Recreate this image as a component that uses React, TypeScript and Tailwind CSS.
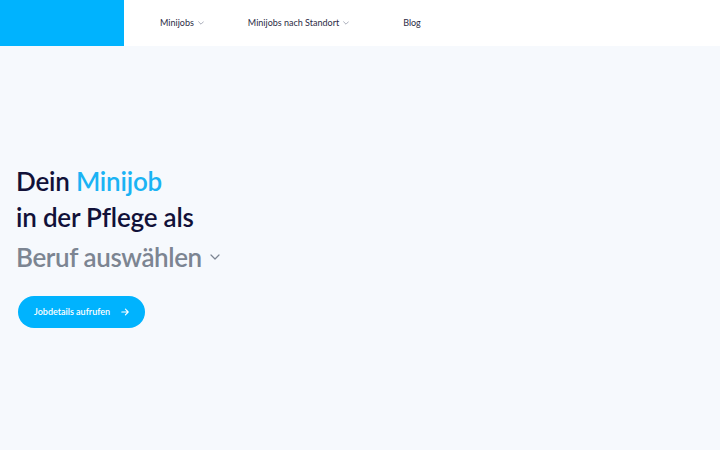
import React from "react";

function Chevron({ className = "" }: { className?: string }) {
  return (
    <svg viewBox="0 0 10 6" className={className} fill="none" stroke="currentColor" strokeWidth="1.2" strokeLinecap="round" strokeLinejoin="round">
      <path d="M1 1l4 4 4-4" />
    </svg>
  );
}

export default function App() {
  return (
    <div className="w-[720px] h-[450px] bg-[#f6f9fd] overflow-hidden" style={{ fontFamily: "Lato, 'Open Sans', sans-serif" }}>
      <header className="h-[46px] bg-white flex">
        <div className="w-[124px] h-full bg-[#00b3fe]" />
        <nav className="flex items-center text-[9px] text-[#2b2b45]">
          <div className="ml-[36px] flex items-center gap-[4px]">
            <span>Minijobs</span>
            <Chevron className="w-[6px] h-[4px] text-[#8a8fa0]" />
          </div>
          <div className="ml-[44px] flex items-center gap-[4px]">
            <span>Minijobs nach Standort</span>
            <Chevron className="w-[6px] h-[4px] text-[#8a8fa0]" />
          </div>
          <div className="ml-[54px]">
            <span>Blog</span>
          </div>
        </nav>
      </header>
      <main className="pl-[16px] pt-[117px]">
        <h1 className="text-[26px] leading-[36px] font-semibold text-[#111139] tracking-[-0.2px]">
          <div>
            Dein <span className="text-[#1ab3f4]">Minijob</span>
          </div>
          <div>in der Pflege als</div>
          <div className="flex items-center gap-[8px] text-[#7c8592] leading-[44px] tracking-[-0.4px]">
            <span>Beruf auswählen</span>
            <Chevron className="w-[10px] h-[6px] text-[#7c8592]" />
          </div>
        </h1>
        <button className="mt-[17px] ml-[2px] h-[32px] w-[127px] rounded-full bg-[#00b3fe] text-white text-[9px] font-semibold flex items-center pl-[16px] gap-[11px]">
          <span>Jobdetails aufrufen</span>
          <svg viewBox="0 0 10 10" className="w-[8px] h-[8px]" fill="none" stroke="currentColor" strokeWidth="1.4" strokeLinecap="round" strokeLinejoin="round">
            <path d="M1 5h8M5.5 1.5L9 5 5.5 8.5" />
          </svg>
        </button>
      </main>
    </div>
  );
}
